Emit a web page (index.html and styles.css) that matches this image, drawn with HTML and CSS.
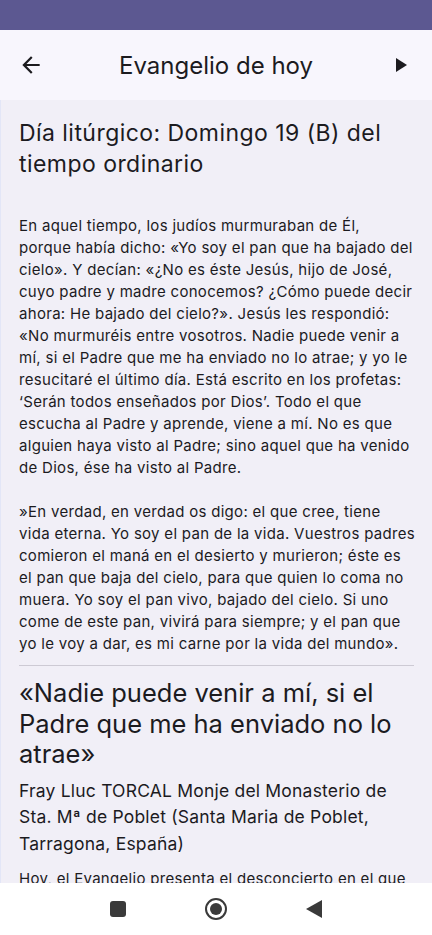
FILE: index.html
```html
<!DOCTYPE html>
<html lang="es">
<head>
  <meta charset="UTF-8">
  <meta name="viewport" content="width=device-width, initial-scale=1.0">
  <title>Evangelio de hoy</title>
  <link rel="stylesheet" href="styles.css">
</head>
<body>
  <div class="status-bar"></div>

  <header class="app-bar">
    <button class="icon-button" aria-label="Atrás">
      <svg width="26" height="26" viewBox="0 0 24 24"><path d="M20 11H7.83l5.59-5.59L12 4l-8 8 8 8 1.41-1.41L7.83 13H20v-2z" fill="#1c1b1f"/></svg>
    </button>
    <h1 class="app-title">Evangelio de hoy</h1>
    <button class="icon-button" aria-label="Reproducir">
      <svg width="24" height="24" viewBox="0 0 24 24"><path d="M8 5v14l11-7z" fill="#1c1b1f"/></svg>
    </button>
  </header>

  <main class="content">
    <h2 class="day-title">Día litúrgico: Domingo 19 (B) del tiempo ordinario</h2>

    <!-- line breaks kept as the app wraps them -->
    <p class="gospel">En aquel tiempo, los judíos murmuraban de Él,<br>
      porque había dicho: «Yo soy el pan que ha bajado del<br>
      cielo». Y decían: «¿No es éste Jesús, hijo de José,<br>
      cuyo padre y madre conocemos? ¿Cómo puede decir<br>
      ahora: He bajado del cielo?». Jesús les respondió:<br>
      «No murmuréis entre vosotros. Nadie puede venir a<br>
      mí, si el Padre que me ha enviado no lo atrae; y yo le<br>
      resucitaré el último día. Está escrito en los profetas:<br>
      ‘Serán todos enseñados por Dios’. Todo el que<br>
      escucha al Padre y aprende, viene a mí. No es que<br>
      alguien haya visto al Padre; sino aquel que ha venido<br>
      de Dios, ése ha visto al Padre.</p>

    <p class="gospel">»En verdad, en verdad os digo: el que cree, tiene<br>
      vida eterna. Yo soy el pan de la vida. Vuestros padres<br>
      comieron el maná en el desierto y murieron; éste es<br>
      el pan que baja del cielo, para que quien lo coma no<br>
      muera. Yo soy el pan vivo, bajado del cielo. Si uno<br>
      come de este pan, vivirá para siempre; y el pan que<br>
      yo le voy a dar, es mi carne por la vida del mundo».</p>

    <hr class="divider">

    <h3 class="comment-title">«Nadie puede venir a mí, si el Padre que me ha enviado no lo atrae»</h3>
    <p class="author">Fray Lluc TORCAL Monje del Monasterio de Sta. Mª de Poblet (Santa Maria de Poblet, Tarragona, España)</p>
    <p class="comment">Hoy, el Evangelio presenta el desconcierto en el que cayeron los judíos al oír las palabras de Jesús.</p>
  </main>

  <nav class="nav-bar">
    <span class="nav-square"></span>
    <span class="nav-home"></span>
    <svg class="nav-back" width="16" height="18" viewBox="0 0 16 18"><path d="M16 0v18L0 9z" fill="#3a3a3a"/></svg>
  </nav>
</body>
</html>
```

FILE: styles.css
```css
* {
  box-sizing: border-box;
}
html, body {
  margin: 0;
  padding: 0;
}
body {
  width: 432px;
  height: 935px;
  overflow: hidden;
  display: flex;
  flex-direction: column;
  font-family: Inter, "Noto Sans", sans-serif;
  color: #1c1b1f;
  background-color: #f1eff7;
}
.status-bar {
  height: 30px;
  flex: none;
  background-color: #5c5891;
}
.app-bar {
  height: 70px;
  flex: none;
  display: flex;
  align-items: center;
  justify-content: space-between;
  padding: 0 8px 0 18px;
  background-color: #f8f6fd;
}
.icon-button {
  display: flex;
  align-items: center;
  justify-content: center;
  padding: 0;
  border: none;
  background: none;
  cursor: pointer;
}
.app-title {
  margin: 0;
  font-size: 24px;
  font-weight: 400;
}
.icon-button:last-child {
  width: 24px;
  margin-right: 12px;
}
.content {
  flex: 1;
  overflow: hidden;
  padding: 18px 18px 0;
  border-left: 1px solid #e3e6f7;
}
.day-title {
  margin: 0 0 35px;
  font-size: 23px;
  line-height: 31px;
  font-weight: 400;
  letter-spacing: 0.45px;
}
.gospel,
.comment {
  margin: 0;
  font-size: 15px;
  line-height: 22px;
  letter-spacing: 0.3px;
}
.gospel {
  white-space: nowrap;
}
.gospel + .gospel {
  margin-top: 22px;
}
.divider {
  margin: 10px 0 12px;
  border: none;
  border-top: 1px solid #cdcad4;
}
.comment-title {
  margin: 0 0 8px;
  font-size: 25.5px;
  line-height: 30.5px;
  font-weight: 400;
}
.author {
  margin: 0 0 11px;
  font-size: 17.5px;
  line-height: 26.5px;
  letter-spacing: 0.2px;
}
.nav-bar {
  height: 52px;
  flex: none;
  display: flex;
  align-items: center;
  justify-content: center;
  gap: 79px;
  background-color: #fff;
}
.nav-square {
  width: 16px;
  height: 16px;
  border-radius: 3px;
  background-color: #3a3a3a;
}
.nav-home {
  width: 22px;
  height: 22px;
  border-radius: 50%;
  border: 2px solid #3a3a3a;
  display: flex;
  align-items: center;
  justify-content: center;
}
.nav-home::after {
  content: "";
  width: 12px;
  height: 12px;
  border-radius: 50%;
  background-color: #3a3a3a;
}
```
